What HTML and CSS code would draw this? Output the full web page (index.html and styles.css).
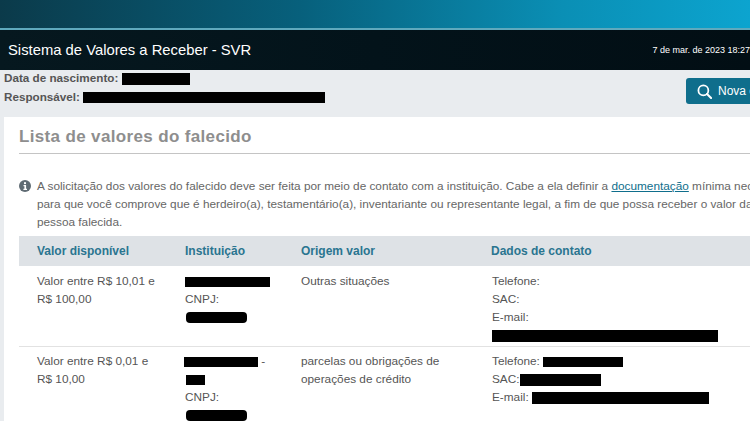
FILE: index.html
```html
<!DOCTYPE html>
<html lang="pt-BR">
<head>
    <meta charset="UTF-8">
    <meta name="viewport" content="width=device-width, initial-scale=1.0">
    <title>Sistema de Valores a Receber - SVR</title>
    <link rel="stylesheet" href="styles.css">
</head>
<body>

    <div class="top-strip"></div>

    <header class="app-bar">
        <span class="app-title">Sistema de Valores a Receber - SVR</span>
        <span class="app-date">7 de mar. de 2023 18:27</span>
    </header>

    <section class="person">
        <div class="person-data">
            <p>Data de nascimento: <span class="hide hide-birth"></span></p>
            <p>Responsável: <span class="hide hide-resp"></span></p>
        </div>
        <button class="search-btn">
            <svg class="search-icon" viewBox="0 0 16 16" width="15" height="15">
                <circle cx="6.8" cy="6.8" r="5.3" fill="none" stroke="#fff" stroke-width="1.9"/>
                <path d="M10.7 10.7L15 15" stroke="#fff" stroke-width="2.2" stroke-linecap="round"/>
            </svg>
            Nova consulta
        </button>
    </section>

    <main class="card">
        <h1>Lista de valores do falecido</h1>

        <div class="notice">
            <svg class="info-icon" viewBox="0 0 12 12" width="12" height="12">
                <circle cx="6" cy="6" r="6" fill="#5f6b73"/>
                <rect x="5" y="2.2" width="2" height="1.9" fill="#fff"/>
                <path d="M4.5 5h2.6v3.8h.9V10H4.4V8.8h1V6.2h-.9z" fill="#fff"/>
            </svg>
            <p>A solicitação dos valores do falecido deve ser feita por meio de contato com a instituição. Cabe a ela definir a <a href="#">documentação</a> mínima necessária<br>
            para que você comprove que é herdeiro(a), testamentário(a), inventariante ou representante legal, a fim de que possa receber o valor da<br>
            pessoa falecida.</p>
        </div>

        <table class="values">
            <thead>
                <tr>
                    <th class="col-value">Valor disponível</th>
                    <th class="col-inst">Instituição</th>
                    <th class="col-origin">Origem valor</th>
                    <th>Dados de contato</th>
                </tr>
            </thead>
            <tbody>
                <tr>
                    <td>Valor entre R$ 10,01 e<br>R$ 100,00</td>
                    <td><span class="hide hide-inst-a"></span><br>CNPJ:<br><span class="hide hide-cnpj"></span></td>
                    <td>Outras situações</td>
                    <td>Telefone:<br>SAC:<br>E-mail:<br><span class="hide hide-mail-a"></span></td>
                </tr>
                <tr>
                    <td>Valor entre R$ 0,01 e<br>R$ 10,00</td>
                    <td><span class="hide hide-inst-b"></span> -<br><span class="hide hide-inst-c"></span><br>CNPJ:<br><span class="hide hide-cnpj"></span></td>
                    <td>parcelas ou obrigações de<br>operações de crédito</td>
                    <td>Telefone: <span class="hide hide-tel"></span><br>SAC:<span class="hide hide-sac"></span><br>E-mail: <span class="hide hide-mail-b"></span></td>
                </tr>
            </tbody>
        </table>
    </main>

</body>
</html>
```

FILE: styles.css
```css
* {
    margin: 0;
    padding: 0;
    box-sizing: border-box;
}

html, body {
    width: 750px;
    height: 421px;
    overflow: hidden;
}

body {
    font-family: 'Liberation Sans', Arial, sans-serif;
    background-color: #e9ecef;
    color: #555;
    font-size: 11.8px;
}

.top-strip {
    height: 30px;
    background: linear-gradient(90deg, #0b3a4a 0%, #07607c 40%, #0a8fb5 75%, #0ca4cf 100%);
    border-bottom: 2px solid #5fa9bd;
}

.app-bar {
    height: 40px;
    padding-left: 8px;
    display: flex;
    justify-content: space-between;
    align-items: center;
    background: linear-gradient(90deg, #06181f 0%, #03131a 50%, #020e14 100%);
    color: #fff;
}

.app-title {
    font-size: 14.8px;
}

.app-date {
    font-size: 9px;
}

.person {
    height: 47px;
    padding-left: 4px;
    display: flex;
    justify-content: space-between;
    align-items: flex-start;
}

.person-data {
    font-size: 11.7px;
    font-weight: bold;
    color: #555;
    line-height: 18.5px;
    margin-top: -1px;
}

.hide {
    display: inline-block;
    background-color: #000;
    vertical-align: middle;
}

.hide-birth {
    width: 68px;
    height: 12px;
}

.hide-resp {
    width: 242px;
    height: 11px;
}

.search-btn {
    width: 116px;
    height: 26px;
    margin-top: 8px;
    margin-right: -52px;
    flex-shrink: 0;
    padding-left: 11px;
    display: flex;
    align-items: center;
    gap: 6px;
    border: none;
    border-radius: 3px;
    background-color: #0f6e8c;
    color: #fff;
    font-family: inherit;
    font-size: 12px;
    white-space: nowrap;
    overflow: hidden;
}

.search-icon {
    flex-shrink: 0;
}

.card {
    width: 790px;
    height: 320px;
    margin-left: 4px;
    padding: 0 15px;
    background-color: #fff;
}

h1 {
    height: 37px;
    padding-top: 11px;
    font-size: 17px;
    letter-spacing: 0.35px;
    line-height: 18px;
    color: #8e8e8e;
    border-bottom: 1px solid #c4c4c4;
}

.notice {
    display: flex;
    gap: 6px;
    margin-top: 23px;
    line-height: 18px;
    white-space: nowrap;
    color: #666;
}

.info-icon {
    flex-shrink: 0;
    margin-top: 3px;
}

.notice a {
    color: #0f6e8c;
}

.values {
    width: 100%;
    margin-top: 5px;
    border-collapse: collapse;
    table-layout: fixed;
}

.values th {
    height: 30px;
    padding-left: 18px;
    text-align: left;
    font-size: 12px;
    color: #2a7590;
    background-color: #dee2e6;
}

.col-value {
    width: 148px;
}

.col-inst {
    width: 116px;
}

.col-origin {
    width: 190px;
}

.values td {
    padding: 6px 0 2px 18px;
    vertical-align: top;
    line-height: 18px;
    color: #555;
}

.values td:last-child {
    padding-left: 19px;
}

.values tbody tr + tr td {
    padding-top: 5px;
    border-top: 1px solid #e2e2e2;
}

.hide-inst-a {
    width: 85px;
    height: 10px;
}

.hide-inst-b {
    width: 74px;
    height: 10px;
    margin-left: -1px;
}

.hide-inst-c {
    width: 19px;
    height: 10px;
    margin-left: 1px;
}

.hide-cnpj {
    width: 61px;
    height: 11px;
    margin-left: 1px;
    border-radius: 4px;
}

.hide-mail-a {
    width: 226px;
    height: 12px;
}

.hide-tel {
    width: 80px;
    height: 10px;
}

.hide-sac {
    width: 81px;
    height: 12px;
}

.hide-mail-b {
    width: 177px;
    height: 12px;
}
```
